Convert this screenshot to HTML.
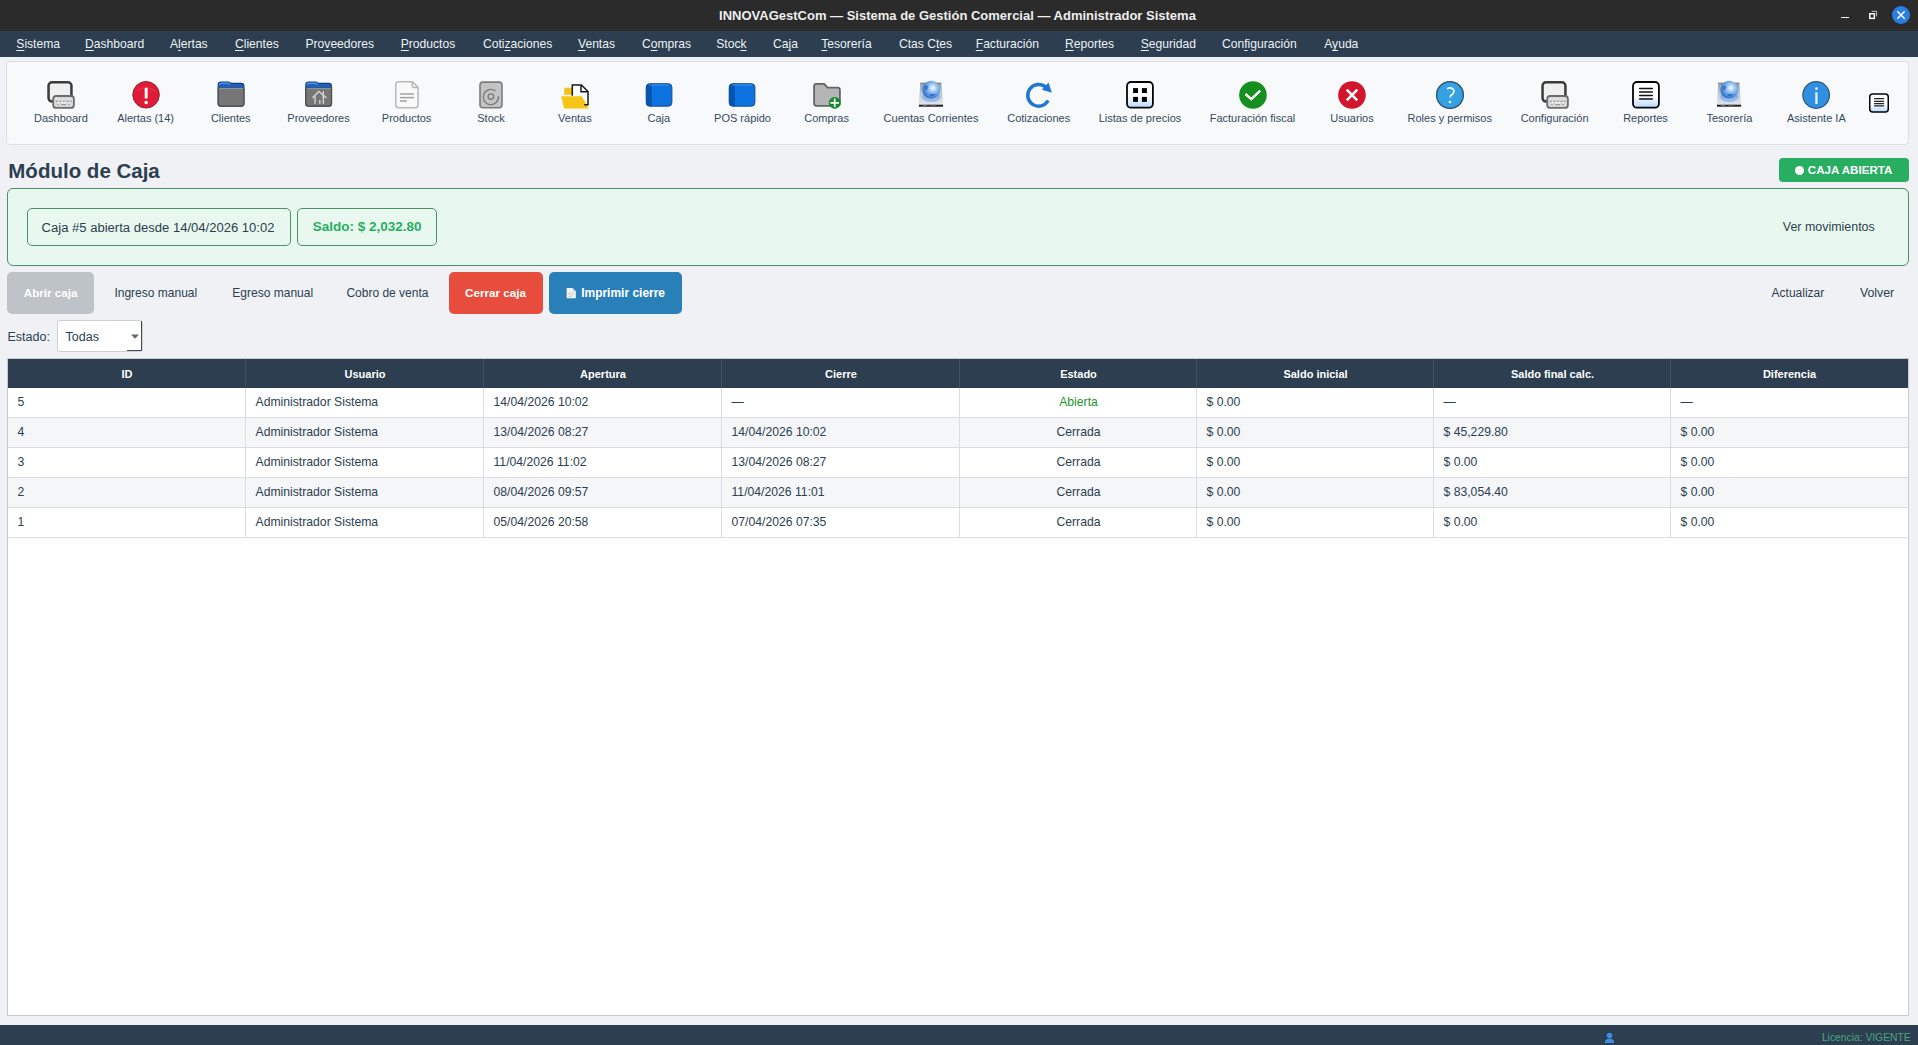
<!DOCTYPE html>
<html><head><meta charset="utf-8"><title>INNOVAGestCom</title>
<style>
html,body{margin:0;padding:0;width:1918px;height:1045px;overflow:hidden;background:#eff1f5;}
body{position:relative;font-family:"Liberation Sans",sans-serif;}
.b{position:absolute;}
.t{position:absolute;white-space:nowrap;}
u{text-decoration:underline;text-decoration-thickness:1px;text-underline-offset:2px;}
</style></head><body>
<div class="b" style="left:0px;top:0px;width:1918px;height:31px;background:#2b2b2b"></div>
<div class="t" style="left:607.50px;width:700px;text-align:center;top:9.00px;font-size:13px;line-height:13px;color:#eeeeee;font-weight:700;">INNOVAGestCom — Sistema de Gestión Comercial — Administrador Sistema</div>
<div class="b" style="left:1841px;top:16.6px;width:8px;height:1.5999999999999979px;background:#f2f2f2"></div>
<svg class="b" style="left:1866px;top:9px" width="14" height="14" viewBox="0 0 14 14"><rect x="3.75" y="4.75" width="4.6" height="4.6" fill="none" stroke="#f4f4f4" stroke-width="1.5"/><path d="M5.6 2.3 H10.6 V7.4" fill="none" stroke="#c8c8c8" stroke-width="1"/></svg>
<svg class="b" style="left:1891px;top:5px" width="20" height="20" viewBox="0 0 20 20"><circle cx="10" cy="10" r="9" fill="#2a7ee0"/><path d="M6.3 6.3 L13.7 13.7 M13.7 6.3 L6.3 13.7" stroke="#fff" stroke-width="1.5"/></svg>
<div class="b" style="left:0px;top:31px;width:1918px;height:26px;background:#2c3e50"></div>
<div class="t" style="left:16.30px;top:38.46px;font-size:12.1px;line-height:12.1px;color:#eef2f5;"><u>S</u>istema</div>
<div class="t" style="left:85.00px;top:38.46px;font-size:12.1px;line-height:12.1px;color:#eef2f5;"><u>D</u>ashboard</div>
<div class="t" style="left:170.00px;top:38.46px;font-size:12.1px;line-height:12.1px;color:#eef2f5;">A<u>l</u>ertas</div>
<div class="t" style="left:235.00px;top:38.46px;font-size:12.1px;line-height:12.1px;color:#eef2f5;"><u>C</u>lientes</div>
<div class="t" style="left:305.50px;top:38.46px;font-size:12.1px;line-height:12.1px;color:#eef2f5;">Pro<u>v</u>eedores</div>
<div class="t" style="left:400.75px;top:38.46px;font-size:12.1px;line-height:12.1px;color:#eef2f5;"><u>P</u>roductos</div>
<div class="t" style="left:483.00px;top:38.46px;font-size:12.1px;line-height:12.1px;color:#eef2f5;">Coti<u>z</u>aciones</div>
<div class="t" style="left:578.00px;top:38.46px;font-size:12.1px;line-height:12.1px;color:#eef2f5;"><u>V</u>entas</div>
<div class="t" style="left:642.00px;top:38.46px;font-size:12.1px;line-height:12.1px;color:#eef2f5;">C<u>o</u>mpras</div>
<div class="t" style="left:716.25px;top:38.46px;font-size:12.1px;line-height:12.1px;color:#eef2f5;">Stoc<u>k</u></div>
<div class="t" style="left:773.00px;top:38.46px;font-size:12.1px;line-height:12.1px;color:#eef2f5;">Ca<u>j</u>a</div>
<div class="t" style="left:821.25px;top:38.46px;font-size:12.1px;line-height:12.1px;color:#eef2f5;"><u>T</u>esorería</div>
<div class="t" style="left:899.00px;top:38.46px;font-size:12.1px;line-height:12.1px;color:#eef2f5;">Ctas C<u>t</u>es</div>
<div class="t" style="left:975.75px;top:38.46px;font-size:12.1px;line-height:12.1px;color:#eef2f5;"><u>F</u>acturación</div>
<div class="t" style="left:1065.00px;top:38.46px;font-size:12.1px;line-height:12.1px;color:#eef2f5;"><u>R</u>eportes</div>
<div class="t" style="left:1140.75px;top:38.46px;font-size:12.1px;line-height:12.1px;color:#eef2f5;"><u>S</u>eguridad</div>
<div class="t" style="left:1222.00px;top:38.46px;font-size:12.1px;line-height:12.1px;color:#eef2f5;">Con<u>f</u>iguración</div>
<div class="t" style="left:1324.25px;top:38.46px;font-size:12.1px;line-height:12.1px;color:#eef2f5;">A<u>y</u>uda</div>
<div class="b" style="left:0px;top:57px;width:1918px;height:968px;background:#eff1f5"></div>
<div class="b" style="left:6px;top:61px;width:1903px;height:84px;background:#f8f9fb;border:1px solid #dcdfe3;border-radius:4px;box-sizing:border-box"></div>
<svg class="b" style="left:44px;top:78px" width="36" height="34" viewBox="0 0 36 34"><rect x="4.55" y="4.35" width="22.9" height="19.2" rx="3.5" fill="#efefef" stroke="#3b3b3b" stroke-width="2.5"/><rect x="9.2" y="18" width="20.7" height="11.9" rx="3" fill="#d9d9d9" stroke="#6b6b6b" stroke-width="1.8"/><g fill="#8a8a8a"><rect x="12" y="22.6" width="1.6" height="1.2"/><rect x="15.6" y="22.6" width="1.6" height="1.2"/><rect x="19.1" y="22.6" width="1.6" height="1.2"/><rect x="22.7" y="22.6" width="1.6" height="1.2"/><rect x="26.2" y="22.6" width="1.4" height="1.2"/><rect x="13.3" y="26.2" width="1.4" height="1"/><rect x="17.2" y="26.2" width="4.9" height="1"/><rect x="24" y="26.2" width="1.6" height="1"/></g><g fill="#fafafa"><rect x="12.2" y="20.6" width="1.2" height="1"/><rect x="15.8" y="20.6" width="1.2" height="1"/><rect x="19.3" y="20.6" width="1.2" height="1"/><rect x="22.9" y="20.6" width="1.2" height="1"/><rect x="26.4" y="20.6" width="1" height="1"/><rect x="13.8" y="24.4" width="1.2" height="1"/><rect x="17.2" y="24.4" width="4.9" height="1"/><rect x="24.4" y="24.4" width="1.2" height="1"/></g></svg>
<svg class="b" style="left:130px;top:78px" width="36" height="34" viewBox="0 0 36 34"><circle cx="16.05" cy="16.75" r="13.3" fill="#e01b38" stroke="#8c1d2c" stroke-width="0.9"/><path d="M7,13 Q16,6 25,13" fill="none" stroke="#f05a6e" stroke-width="0.8" opacity="0.6"/><rect x="14.7" y="9.8" width="2.9" height="11" rx="1" fill="#fff"/><circle cx="16.15" cy="24.4" r="1.75" fill="#fff"/></svg>
<svg class="b" style="left:214px;top:78px" width="36" height="34" viewBox="0 0 36 34"><g transform="translate(-0.2,0)"><path d="M4.4,7 Q4.4,4.1 7.3,4.1 H14.6 Q16,4.1 16.8,5.4 H27.4 Q30.1,5.4 30.1,8.2 V25.6 Q30.1,28.2 27.4,28.2 H7.1 Q4.4,28.2 4.4,25.6 Z" fill="#1f5fbf" stroke="#153d78" stroke-width="1.1"/><path d="M5.8,7 Q5.8,5.3 7.5,5.3 H14.5 Q15.5,5.3 16,7" fill="none" stroke="#4a90ee" stroke-width="1.4"/><path d="M4.4,10.2 H30.1 V25.6 Q30.1,28.2 27.4,28.2 H7.1 Q4.4,28.2 4.4,25.6 Z" fill="#767676" stroke="#4f4f4f" stroke-width="1.3"/><path d="M5.2,10.6 H29.3" stroke="#9aa3ad" stroke-width="0.9"/></g></svg>
<svg class="b" style="left:301px;top:78px" width="36" height="34" viewBox="0 0 36 34"><g transform="translate(0.4,0)"><path d="M4.4,7 Q4.4,4.1 7.3,4.1 H14.6 Q16,4.1 16.8,5.4 H27.4 Q30.1,5.4 30.1,8.2 V25.6 Q30.1,28.2 27.4,28.2 H7.1 Q4.4,28.2 4.4,25.6 Z" fill="#1f5fbf" stroke="#153d78" stroke-width="1.1"/><path d="M5.8,7 Q5.8,5.3 7.5,5.3 H14.5 Q15.5,5.3 16,7" fill="none" stroke="#4a90ee" stroke-width="1.4"/><path d="M4.4,10.2 H30.1 V25.6 Q30.1,28.2 27.4,28.2 H7.1 Q4.4,28.2 4.4,25.6 Z" fill="#767676" stroke="#4f4f4f" stroke-width="1.3"/><path d="M5.2,10.6 H29.3" stroke="#9aa3ad" stroke-width="0.9"/><g fill="none" stroke="#d4d4d4" stroke-width="1.4" stroke-linecap="round"><path d="M11.4,19.6 L17.5,13.4 L24.6,19.6"/><path d="M13.6,17.6 V25.2 M21.9,13.6 V25.2 M18.4,22.4 V25.2"/></g></g></svg>
<svg class="b" style="left:388px;top:78px" width="36" height="34" viewBox="0 0 36 34"><path d="M10.5,3.85 H24.5 L30.05,9.4 V27.1 Q30.05,29.85 27.3,29.85 H10.5 Q7.75,29.85 7.75,27.1 V6.6 Q7.75,3.85 10.5,3.85 Z" fill="#f9f9f9" stroke="#b9b9b9" stroke-width="1.5"/><path d="M24.2,3.85 V7.5 Q24.2,9.6 26.3,9.6 H30.05" fill="none" stroke="#b9b9b9" stroke-width="1.5"/><g fill="#9c9c9c"><rect x="12" y="15.3" width="13.9" height="1.4"/><rect x="12" y="18.9" width="13.9" height="1.4"/><rect x="12" y="22.3" width="6.9" height="1.4"/></g></svg>
<svg class="b" style="left:473px;top:78px" width="36" height="34" viewBox="0 0 36 34"><rect x="7" y="4.1" width="22" height="25.6" rx="3" fill="#c4c4c4" stroke="#7b7b7b" stroke-width="1.6"/><path d="M22.5,13 A7.6,7.6 0 1 0 25.4,18.2" fill="none" stroke="#7a7a7a" stroke-width="1.3"/><circle cx="17.9" cy="18.6" r="2.8" fill="none" stroke="#7a7a7a" stroke-width="1.3"/></svg>
<svg class="b" style="left:557px;top:78px" width="36" height="34" viewBox="0 0 36 34"><rect x="7.2" y="9.8" width="7.8" height="7" fill="#f0c419"/><path d="M15.3,17.8 V6.9 H24.4 L31,13.5 V26.7 H27 L24.5,18.2 H15.3 Z" fill="#ffffff"/><path d="M4.2,18.2 H24.8 L31.8,30.6 H7.2 Z" fill="#f6c515"/><path d="M15.3,17.8 V6.9 H24.4 L31,13.5 V26.7 H27.2" fill="none" stroke="#181818" stroke-width="1.5"/><path d="M24,7 V13.7 H31" fill="none" stroke="#181818" stroke-width="1.5"/></svg>
<svg class="b" style="left:641px;top:78px" width="36" height="34" viewBox="0 0 36 34"><rect x="5.2" y="5.7" width="25.7" height="22.5" rx="3.5" fill="#0b72e0" stroke="#1a4d8f" stroke-width="1"/><path d="M8.7,5.7 H10.8 V28.2 H8.7 Q5.2,28.2 5.2,24.7 V9.2 Q5.2,5.7 8.7,5.7 Z" fill="#0754ad"/><path d="M8,7 H28" stroke="#4a9af0" stroke-width="0.9"/></svg>
<svg class="b" style="left:724px;top:78px" width="36" height="34" viewBox="0 0 36 34"><rect x="5.2" y="5.7" width="25.7" height="22.5" rx="3.5" fill="#0b72e0" stroke="#1a4d8f" stroke-width="1"/><path d="M8.7,5.7 H10.8 V28.2 H8.7 Q5.2,28.2 5.2,24.7 V9.2 Q5.2,5.7 8.7,5.7 Z" fill="#0754ad"/><path d="M8,7 H28" stroke="#4a9af0" stroke-width="0.9"/></svg>
<svg class="b" style="left:809px;top:78px" width="36" height="34" viewBox="0 0 36 34"><path d="M5.1,8 Q5.1,5.8 7.3,5.8 H15.2 L18.5,9.7 H28.6 Q30.9,9.7 30.9,12 V25.6 Q30.9,27.8 28.7,27.8 H7.3 Q5.1,27.8 5.1,25.6 Z" fill="#b5b5b5" stroke="#646464" stroke-width="1.8"/><circle cx="25.7" cy="24.8" r="5.9" fill="#12892a"/><path d="M21.4,24.8 H30 M25.7,20.5 V29.1" stroke="#fff" stroke-width="1.7"/></svg>
<svg class="b" style="left:913px;top:76px" width="36" height="34" viewBox="0 0 36 34"><defs><linearGradient id="drv" x1="0" y1="0" x2="0" y2="1"><stop offset="0" stop-color="#8f9aa8"/><stop offset="0.45" stop-color="#b9c6d6"/><stop offset="1" stop-color="#e2e6ec"/></linearGradient><radialGradient id="glb" cx="0.6" cy="0.4" r="0.65"><stop offset="0" stop-color="#ffffff"/><stop offset="0.3" stop-color="#a9cdf5"/><stop offset="0.75" stop-color="#4f8fdc"/><stop offset="1" stop-color="#2a63b8"/></radialGradient></defs><path d="M7.3,6.9 H28.3 L30.1,28.7 H5.9 Z" fill="url(#drv)"/><path d="M7.3,7.1 H28.3" stroke="#6b6f75" stroke-width="0.8"/><rect x="5.9" y="28.7" width="24.2" height="2" fill="#202020"/><rect x="10" y="28.9" width="4" height="1.2" fill="#777"/><rect x="17" y="28.9" width="6" height="1.2" fill="#555"/><ellipse cx="18.2" cy="20.5" rx="9.2" ry="5.2" fill="#79a8e6" opacity="0.75"/><ellipse cx="18.2" cy="23.5" rx="7.5" ry="2.4" fill="#9bbce8" opacity="0.7"/><circle cx="18.2" cy="13.7" r="8.9" fill="url(#glb)"/><path d="M11,10.5 Q13.5,8.5 15.5,10.5 Q15,14 12.5,15" fill="#1f5fb8" opacity="0.65"/><path d="M16.5,18.3 Q20,17 23,18.6 Q20,20.6 17,20" fill="#1f5fb8" opacity="0.7"/></svg>
<svg class="b" style="left:1021px;top:78px" width="36" height="34" viewBox="0 0 36 34"><path d="M27.13,22.5 A10.85,10.85 0 1 1 24.86,9.24" fill="none" stroke="#1e76d2" stroke-width="3.4"/><path d="M27.5,4.6 L30.9,14.7 L20.8,11.7 Z" fill="#1e76d2"/></svg>
<svg class="b" style="left:1122px;top:78px" width="36" height="34" viewBox="0 0 36 34"><defs><linearGradient id="frma" x1="0" y1="0" x2="0" y2="1"><stop offset="0.55" stop-color="#ffffff"/><stop offset="1" stop-color="#b6d8ff"/></linearGradient></defs><rect x="5" y="4" width="25.9" height="25.7" rx="4" fill="url(#frma)" stroke="#050505" stroke-width="1.8"/><g fill="#000"><rect x="11.1" y="10.1" width="4.9" height="4.9"/><rect x="19.9" y="10.1" width="5" height="4.9"/><rect x="11.1" y="18.9" width="4.9" height="5"/><rect x="19.9" y="18.9" width="5" height="5"/></g></svg>
<svg class="b" style="left:1235px;top:78px" width="36" height="34" viewBox="0 0 36 34"><circle cx="17.95" cy="17" r="13.8" fill="#178f20"/><path d="M10.4,16 L16.3,21.2 L25.2,12.7" fill="none" stroke="#fff" stroke-width="2.4"/></svg>
<svg class="b" style="left:1334px;top:78px" width="36" height="34" viewBox="0 0 36 34"><circle cx="17.95" cy="17" r="13.8" fill="#d2142c"/><path d="M12.7,11.7 L23.3,22.4 M23.3,11.7 L12.7,22.4" stroke="#fff" stroke-width="2.6"/></svg>
<svg class="b" style="left:1432px;top:78px" width="36" height="34" viewBox="0 0 36 34"><circle cx="18" cy="17" r="13.4" fill="#35a1e3" stroke="#2b4e6a" stroke-width="1.3"/><path d="M15,10.9 Q17.5,9.3 20.2,10.4 Q22.6,11.8 21.6,14.6 Q20.8,16.4 18.5,17.8 V19.6" fill="none" stroke="#eaffff" stroke-width="1.7"/><circle cx="18" cy="24" r="1.35" fill="#eaffff"/></svg>
<svg class="b" style="left:1537.75px;top:78px" width="36" height="34" viewBox="0 0 36 34"><rect x="4.55" y="4.35" width="22.9" height="19.2" rx="3.5" fill="#efefef" stroke="#3b3b3b" stroke-width="2.5"/><rect x="9.2" y="18" width="20.7" height="11.9" rx="3" fill="#d9d9d9" stroke="#6b6b6b" stroke-width="1.8"/><g fill="#8a8a8a"><rect x="12" y="22.6" width="1.6" height="1.2"/><rect x="15.6" y="22.6" width="1.6" height="1.2"/><rect x="19.1" y="22.6" width="1.6" height="1.2"/><rect x="22.7" y="22.6" width="1.6" height="1.2"/><rect x="26.2" y="22.6" width="1.4" height="1.2"/><rect x="13.3" y="26.2" width="1.4" height="1"/><rect x="17.2" y="26.2" width="4.9" height="1"/><rect x="24" y="26.2" width="1.6" height="1"/></g><g fill="#fafafa"><rect x="12.2" y="20.6" width="1.2" height="1"/><rect x="15.8" y="20.6" width="1.2" height="1"/><rect x="19.3" y="20.6" width="1.2" height="1"/><rect x="22.9" y="20.6" width="1.2" height="1"/><rect x="26.4" y="20.6" width="1" height="1"/><rect x="13.8" y="24.4" width="1.2" height="1"/><rect x="17.2" y="24.4" width="4.9" height="1"/><rect x="24.4" y="24.4" width="1.2" height="1"/></g></svg>
<svg class="b" style="left:1628px;top:78px" width="36" height="34" viewBox="0 0 36 34"><defs><linearGradient id="frmb" x1="0" y1="0" x2="0" y2="1"><stop offset="0.55" stop-color="#ffffff"/><stop offset="1" stop-color="#b6d8ff"/></linearGradient></defs><rect x="5" y="4" width="25.9" height="25.7" rx="4" fill="url(#frmb)" stroke="#050505" stroke-width="1.8"/><g stroke="#111" stroke-width="1.5" stroke-linecap="round"><path d="M11.6,10.6 H24.4 M11.6,14 H24.4 M11.6,17.6 H24.4 M11.6,21 H24.4"/></g></svg>
<svg class="b" style="left:1711.25px;top:76px" width="36" height="34" viewBox="0 0 36 34"><defs><linearGradient id="drv2" x1="0" y1="0" x2="0" y2="1"><stop offset="0" stop-color="#8f9aa8"/><stop offset="0.45" stop-color="#b9c6d6"/><stop offset="1" stop-color="#e2e6ec"/></linearGradient><radialGradient id="glb2" cx="0.6" cy="0.4" r="0.65"><stop offset="0" stop-color="#ffffff"/><stop offset="0.3" stop-color="#a9cdf5"/><stop offset="0.75" stop-color="#4f8fdc"/><stop offset="1" stop-color="#2a63b8"/></radialGradient></defs><path d="M7.3,6.9 H28.3 L30.1,28.7 H5.9 Z" fill="url(#drv2)"/><path d="M7.3,7.1 H28.3" stroke="#6b6f75" stroke-width="0.8"/><rect x="5.9" y="28.7" width="24.2" height="2" fill="#202020"/><rect x="10" y="28.9" width="4" height="1.2" fill="#777"/><rect x="17" y="28.9" width="6" height="1.2" fill="#555"/><ellipse cx="18.2" cy="20.5" rx="9.2" ry="5.2" fill="#79a8e6" opacity="0.75"/><ellipse cx="18.2" cy="23.5" rx="7.5" ry="2.4" fill="#9bbce8" opacity="0.7"/><circle cx="18.2" cy="13.7" r="8.9" fill="url(#glb2)"/><path d="M11,10.5 Q13.5,8.5 15.5,10.5 Q15,14 12.5,15" fill="#1f5fb8" opacity="0.65"/><path d="M16.5,18.3 Q20,17 23,18.6 Q20,20.6 17,20" fill="#1f5fb8" opacity="0.7"/></svg>
<svg class="b" style="left:1800px;top:78px" width="36" height="34" viewBox="0 0 36 34"><circle cx="16.15" cy="17" r="13.3" fill="#2f8fe0" stroke="#2b5577" stroke-width="1.2"/><circle cx="16.4" cy="10.6" r="1.3" fill="#e8f8ff"/><rect x="15.3" y="14.2" width="2.2" height="11.8" fill="#e8f8ff"/></svg>
<svg class="b" style="left:1866px;top:90px" width="26" height="26" viewBox="0 0 26 26"><defs><linearGradient id="frmc" x1="0" y1="0" x2="0" y2="1"><stop offset="0.55" stop-color="#ffffff"/><stop offset="1" stop-color="#b6d8ff"/></linearGradient></defs><rect x="3.75" y="3.95" width="18.5" height="18" rx="3" fill="url(#frmc)" stroke="#050505" stroke-width="1.5"/><g stroke="#222" stroke-width="1.2"><path d="M8.1,8.6 H18.1 M8.1,11.4 H18.1 M8.1,13.6 H18.1 M8.1,15.9 H18.1"/></g></svg>
<div class="t" style="left:-19.10px;width:160px;text-align:center;top:112.89px;font-size:11px;line-height:11px;color:#34495e;">Dashboard</div>
<div class="t" style="left:65.60px;width:160px;text-align:center;top:112.89px;font-size:11px;line-height:11px;color:#34495e;">Alertas (14)</div>
<div class="t" style="left:150.75px;width:160px;text-align:center;top:112.89px;font-size:11px;line-height:11px;color:#34495e;">Clientes</div>
<div class="t" style="left:238.50px;width:160px;text-align:center;top:112.89px;font-size:11px;line-height:11px;color:#34495e;">Proveedores</div>
<div class="t" style="left:326.60px;width:160px;text-align:center;top:112.89px;font-size:11px;line-height:11px;color:#34495e;">Productos</div>
<div class="t" style="left:411.00px;width:160px;text-align:center;top:112.89px;font-size:11px;line-height:11px;color:#34495e;">Stock</div>
<div class="t" style="left:494.90px;width:160px;text-align:center;top:112.89px;font-size:11px;line-height:11px;color:#34495e;">Ventas</div>
<div class="t" style="left:578.75px;width:160px;text-align:center;top:112.89px;font-size:11px;line-height:11px;color:#34495e;">Caja</div>
<div class="t" style="left:662.50px;width:160px;text-align:center;top:112.89px;font-size:11px;line-height:11px;color:#34495e;">POS rápido</div>
<div class="t" style="left:746.60px;width:160px;text-align:center;top:112.89px;font-size:11px;line-height:11px;color:#34495e;">Compras</div>
<div class="t" style="left:851.00px;width:160px;text-align:center;top:112.89px;font-size:11px;line-height:11px;color:#34495e;">Cuentas Corrientes</div>
<div class="t" style="left:958.75px;width:160px;text-align:center;top:112.89px;font-size:11px;line-height:11px;color:#34495e;">Cotizaciones</div>
<div class="t" style="left:1060.00px;width:160px;text-align:center;top:112.89px;font-size:11px;line-height:11px;color:#34495e;">Listas de precios</div>
<div class="t" style="left:1172.50px;width:160px;text-align:center;top:112.89px;font-size:11px;line-height:11px;color:#34495e;">Facturación fiscal</div>
<div class="t" style="left:1272.00px;width:160px;text-align:center;top:112.89px;font-size:11px;line-height:11px;color:#34495e;">Usuarios</div>
<div class="t" style="left:1369.75px;width:160px;text-align:center;top:112.89px;font-size:11px;line-height:11px;color:#34495e;">Roles y permisos</div>
<div class="t" style="left:1474.60px;width:160px;text-align:center;top:112.89px;font-size:11px;line-height:11px;color:#34495e;">Configuración</div>
<div class="t" style="left:1565.50px;width:160px;text-align:center;top:112.89px;font-size:11px;line-height:11px;color:#34495e;">Reportes</div>
<div class="t" style="left:1649.40px;width:160px;text-align:center;top:112.89px;font-size:11px;line-height:11px;color:#34495e;">Tesorería</div>
<div class="t" style="left:1736.40px;width:160px;text-align:center;top:112.89px;font-size:11px;line-height:11px;color:#34495e;">Asistente IA</div>
<div class="t" style="left:8.30px;top:161.15px;font-size:20.5px;line-height:20.5px;color:#2c3e50;font-weight:700;">Módulo de Caja</div>
<div class="b" style="left:1779px;top:158px;width:130px;height:24px;background:#27ae60;border-radius:4px"></div>
<div class="b" style="left:1794.6px;top:166px;width:9.4px;height:9.4px;border-radius:50%;background:#ffffff"></div>
<div class="t" style="left:1807.80px;top:164.08px;font-size:11.6px;line-height:11.6px;color:#ffffff;font-weight:700;">CAJA ABIERTA</div>
<div class="b" style="left:7px;top:188px;width:1902px;height:78px;background:#e9f8ee;border:1px solid #4a9068;border-radius:6px;box-sizing:border-box"></div>
<div class="b" style="left:27px;top:208px;width:264px;height:38px;border:1px solid #4a9068;border-radius:5px;box-sizing:border-box"></div>
<div class="t" style="left:41.60px;top:220.55px;font-size:13.05px;line-height:13.05px;color:#2c3e50;">Caja #5 abierta desde 14/04/2026 10:02</div>
<div class="b" style="left:297px;top:208px;width:140px;height:38px;border:1px solid #4a9068;border-radius:5px;box-sizing:border-box"></div>
<div class="t" style="left:312.70px;top:220.07px;font-size:13.5px;line-height:13.5px;color:#27ae60;font-weight:700;">Saldo: $ 2,032.80</div>
<div class="t" style="left:1782.80px;top:221.46px;font-size:12.45px;line-height:12.45px;color:#2c3e50;">Ver movimientos</div>
<div class="b" style="left:7px;top:272px;width:87px;height:42px;background:#bdc3c7;border-radius:5px"></div>
<div class="t" style="left:23.75px;top:287.14px;font-size:11.65px;line-height:11.65px;color:#ffffff;font-weight:700;">Abrir caja</div>
<div class="t" style="left:114.40px;top:286.63px;font-size:12.02px;line-height:12.02px;color:#2c3e50;">Ingreso manual</div>
<div class="t" style="left:232.30px;top:286.63px;font-size:12.02px;line-height:12.02px;color:#2c3e50;">Egreso manual</div>
<div class="t" style="left:346.40px;top:286.64px;font-size:12.0px;line-height:12.0px;color:#2c3e50;">Cobro de venta</div>
<div class="b" style="left:449px;top:272px;width:94px;height:42px;background:#e74c3c;border-radius:5px"></div>
<div class="t" style="left:465.00px;top:287.10px;font-size:11.7px;line-height:11.7px;color:#ffffff;font-weight:700;">Cerrar caja</div>
<div class="b" style="left:549px;top:272px;width:133px;height:42px;background:#2980b9;border-radius:5px"></div>
<svg class="b" style="left:566px;top:287px" width="11" height="12" viewBox="0 0 11 12"><path d="M0.7,1 H6.5 L9.8,4.3 V11.3 H0.7 Z" fill="#f4f4f4"/><path d="M6.5,1 V4.3 H9.8" fill="#cfcfcf"/><path d="M2.2,6 H8 M2.2,7.8 H8 M2.2,9.6 H6" stroke="#c9c9c9" stroke-width="0.8"/></svg>
<div class="t" style="left:581.20px;top:287.87px;font-size:11.97px;line-height:11.97px;color:#ffffff;font-weight:700;">Imprimir cierre</div>
<div class="t" style="left:1771.60px;top:286.74px;font-size:12.0px;line-height:12.0px;color:#2c3e50;">Actualizar</div>
<div class="t" style="left:1860.00px;top:287.49px;font-size:12.3px;line-height:12.3px;color:#2c3e50;">Volver</div>
<div class="t" style="left:7.50px;top:331.02px;font-size:12.5px;line-height:12.5px;color:#2c3e50;">Estado:</div>
<div class="b" style="left:57px;top:320px;width:86px;height:32px;background:#ffffff;border:1px solid #cdd1d6;border-radius:3px;box-sizing:border-box"></div>
<div class="b" style="left:141px;top:321px;width:1.4000000000000057px;height:30px;background:#454b52"></div>
<div class="b" style="left:127px;top:349.6px;width:15.400000000000006px;height:1.3999999999999773px;background:#454b52"></div>
<svg class="b" style="left:130px;top:333.6px" width="10" height="6" viewBox="0 0 10 6"><path d="M1,0.5 H9 L5,4.8 Z" fill="#666"/></svg>
<div class="t" style="left:65.60px;top:331.02px;font-size:12.5px;line-height:12.5px;color:#2c3e50;">Todas</div>
<div class="b" style="left:7px;top:358px;width:1902px;height:658px;background:#ffffff;border:1px solid #c6c9ce;box-sizing:border-box"></div>
<div class="b" style="left:8px;top:359px;width:1900px;height:29px;background:#2c3e50"></div>
<div class="t" style="left:27.00px;width:200px;text-align:center;top:368.69px;font-size:11px;line-height:11px;color:#ffffff;font-weight:700;">ID</div>
<div class="t" style="left:265.00px;width:200px;text-align:center;top:368.69px;font-size:11px;line-height:11px;color:#ffffff;font-weight:700;">Usuario</div>
<div class="t" style="left:503.00px;width:200px;text-align:center;top:368.69px;font-size:11px;line-height:11px;color:#ffffff;font-weight:700;">Apertura</div>
<div class="t" style="left:741.00px;width:200px;text-align:center;top:368.69px;font-size:11px;line-height:11px;color:#ffffff;font-weight:700;">Cierre</div>
<div class="t" style="left:978.50px;width:200px;text-align:center;top:368.69px;font-size:11px;line-height:11px;color:#ffffff;font-weight:700;">Estado</div>
<div class="t" style="left:1215.50px;width:200px;text-align:center;top:368.69px;font-size:11px;line-height:11px;color:#ffffff;font-weight:700;">Saldo inicial</div>
<div class="t" style="left:1452.50px;width:200px;text-align:center;top:368.69px;font-size:11px;line-height:11px;color:#ffffff;font-weight:700;">Saldo final calc.</div>
<div class="t" style="left:1689.50px;width:200px;text-align:center;top:368.69px;font-size:11px;line-height:11px;color:#ffffff;font-weight:700;">Diferencia</div>
<div class="b" style="left:245px;top:359px;width:1px;height:29px;background:#3e5064"></div>
<div class="b" style="left:483px;top:359px;width:1px;height:29px;background:#3e5064"></div>
<div class="b" style="left:721px;top:359px;width:1px;height:29px;background:#3e5064"></div>
<div class="b" style="left:959px;top:359px;width:1px;height:29px;background:#3e5064"></div>
<div class="b" style="left:1196px;top:359px;width:1px;height:29px;background:#3e5064"></div>
<div class="b" style="left:1433px;top:359px;width:1px;height:29px;background:#3e5064"></div>
<div class="b" style="left:1670px;top:359px;width:1px;height:29px;background:#3e5064"></div>
<div class="b" style="left:8px;top:388px;width:1900px;height:29px;background:#ffffff"></div>
<div class="b" style="left:8px;top:417px;width:1900px;height:1px;background:#d9dce0"></div>
<div class="b" style="left:245px;top:388px;width:1px;height:30px;background:#d9dce0"></div>
<div class="b" style="left:483px;top:388px;width:1px;height:30px;background:#d9dce0"></div>
<div class="b" style="left:721px;top:388px;width:1px;height:30px;background:#d9dce0"></div>
<div class="b" style="left:959px;top:388px;width:1px;height:30px;background:#d9dce0"></div>
<div class="b" style="left:1196px;top:388px;width:1px;height:30px;background:#d9dce0"></div>
<div class="b" style="left:1433px;top:388px;width:1px;height:30px;background:#d9dce0"></div>
<div class="b" style="left:1670px;top:388px;width:1px;height:30px;background:#d9dce0"></div>
<div class="t" style="left:17.50px;top:395.57px;font-size:12.2px;line-height:12.2px;color:#2c3e50;">5</div>
<div class="t" style="left:255.50px;top:395.57px;font-size:12.2px;line-height:12.2px;color:#2c3e50;">Administrador Sistema</div>
<div class="t" style="left:493.50px;top:395.57px;font-size:12.2px;line-height:12.2px;color:#2c3e50;">14/04/2026 10:02</div>
<div class="t" style="left:731.50px;top:395.57px;font-size:12.2px;line-height:12.2px;color:#2c3e50;">—</div>
<div class="t" style="left:978.50px;width:200px;text-align:center;top:395.57px;font-size:12.2px;line-height:12.2px;color:#24962e;">Abierta</div>
<div class="t" style="left:1206.50px;top:395.57px;font-size:12.2px;line-height:12.2px;color:#2c3e50;">$ 0.00</div>
<div class="t" style="left:1443.50px;top:395.57px;font-size:12.2px;line-height:12.2px;color:#2c3e50;">—</div>
<div class="t" style="left:1680.50px;top:395.57px;font-size:12.2px;line-height:12.2px;color:#2c3e50;">—</div>
<div class="b" style="left:8px;top:418px;width:1900px;height:29px;background:#f4f6f8"></div>
<div class="b" style="left:8px;top:447px;width:1900px;height:1px;background:#d9dce0"></div>
<div class="b" style="left:245px;top:418px;width:1px;height:30px;background:#d9dce0"></div>
<div class="b" style="left:483px;top:418px;width:1px;height:30px;background:#d9dce0"></div>
<div class="b" style="left:721px;top:418px;width:1px;height:30px;background:#d9dce0"></div>
<div class="b" style="left:959px;top:418px;width:1px;height:30px;background:#d9dce0"></div>
<div class="b" style="left:1196px;top:418px;width:1px;height:30px;background:#d9dce0"></div>
<div class="b" style="left:1433px;top:418px;width:1px;height:30px;background:#d9dce0"></div>
<div class="b" style="left:1670px;top:418px;width:1px;height:30px;background:#d9dce0"></div>
<div class="t" style="left:17.50px;top:425.57px;font-size:12.2px;line-height:12.2px;color:#2c3e50;">4</div>
<div class="t" style="left:255.50px;top:425.57px;font-size:12.2px;line-height:12.2px;color:#2c3e50;">Administrador Sistema</div>
<div class="t" style="left:493.50px;top:425.57px;font-size:12.2px;line-height:12.2px;color:#2c3e50;">13/04/2026 08:27</div>
<div class="t" style="left:731.50px;top:425.57px;font-size:12.2px;line-height:12.2px;color:#2c3e50;">14/04/2026 10:02</div>
<div class="t" style="left:978.50px;width:200px;text-align:center;top:425.57px;font-size:12.2px;line-height:12.2px;color:#2c3e50;">Cerrada</div>
<div class="t" style="left:1206.50px;top:425.57px;font-size:12.2px;line-height:12.2px;color:#2c3e50;">$ 0.00</div>
<div class="t" style="left:1443.50px;top:425.57px;font-size:12.2px;line-height:12.2px;color:#2c3e50;">$ 45,229.80</div>
<div class="t" style="left:1680.50px;top:425.57px;font-size:12.2px;line-height:12.2px;color:#2c3e50;">$ 0.00</div>
<div class="b" style="left:8px;top:448px;width:1900px;height:29px;background:#ffffff"></div>
<div class="b" style="left:8px;top:477px;width:1900px;height:1px;background:#d9dce0"></div>
<div class="b" style="left:245px;top:448px;width:1px;height:30px;background:#d9dce0"></div>
<div class="b" style="left:483px;top:448px;width:1px;height:30px;background:#d9dce0"></div>
<div class="b" style="left:721px;top:448px;width:1px;height:30px;background:#d9dce0"></div>
<div class="b" style="left:959px;top:448px;width:1px;height:30px;background:#d9dce0"></div>
<div class="b" style="left:1196px;top:448px;width:1px;height:30px;background:#d9dce0"></div>
<div class="b" style="left:1433px;top:448px;width:1px;height:30px;background:#d9dce0"></div>
<div class="b" style="left:1670px;top:448px;width:1px;height:30px;background:#d9dce0"></div>
<div class="t" style="left:17.50px;top:455.57px;font-size:12.2px;line-height:12.2px;color:#2c3e50;">3</div>
<div class="t" style="left:255.50px;top:455.57px;font-size:12.2px;line-height:12.2px;color:#2c3e50;">Administrador Sistema</div>
<div class="t" style="left:493.50px;top:455.57px;font-size:12.2px;line-height:12.2px;color:#2c3e50;">11/04/2026 11:02</div>
<div class="t" style="left:731.50px;top:455.57px;font-size:12.2px;line-height:12.2px;color:#2c3e50;">13/04/2026 08:27</div>
<div class="t" style="left:978.50px;width:200px;text-align:center;top:455.57px;font-size:12.2px;line-height:12.2px;color:#2c3e50;">Cerrada</div>
<div class="t" style="left:1206.50px;top:455.57px;font-size:12.2px;line-height:12.2px;color:#2c3e50;">$ 0.00</div>
<div class="t" style="left:1443.50px;top:455.57px;font-size:12.2px;line-height:12.2px;color:#2c3e50;">$ 0.00</div>
<div class="t" style="left:1680.50px;top:455.57px;font-size:12.2px;line-height:12.2px;color:#2c3e50;">$ 0.00</div>
<div class="b" style="left:8px;top:478px;width:1900px;height:29px;background:#f4f6f8"></div>
<div class="b" style="left:8px;top:507px;width:1900px;height:1px;background:#d9dce0"></div>
<div class="b" style="left:245px;top:478px;width:1px;height:30px;background:#d9dce0"></div>
<div class="b" style="left:483px;top:478px;width:1px;height:30px;background:#d9dce0"></div>
<div class="b" style="left:721px;top:478px;width:1px;height:30px;background:#d9dce0"></div>
<div class="b" style="left:959px;top:478px;width:1px;height:30px;background:#d9dce0"></div>
<div class="b" style="left:1196px;top:478px;width:1px;height:30px;background:#d9dce0"></div>
<div class="b" style="left:1433px;top:478px;width:1px;height:30px;background:#d9dce0"></div>
<div class="b" style="left:1670px;top:478px;width:1px;height:30px;background:#d9dce0"></div>
<div class="t" style="left:17.50px;top:485.57px;font-size:12.2px;line-height:12.2px;color:#2c3e50;">2</div>
<div class="t" style="left:255.50px;top:485.57px;font-size:12.2px;line-height:12.2px;color:#2c3e50;">Administrador Sistema</div>
<div class="t" style="left:493.50px;top:485.57px;font-size:12.2px;line-height:12.2px;color:#2c3e50;">08/04/2026 09:57</div>
<div class="t" style="left:731.50px;top:485.57px;font-size:12.2px;line-height:12.2px;color:#2c3e50;">11/04/2026 11:01</div>
<div class="t" style="left:978.50px;width:200px;text-align:center;top:485.57px;font-size:12.2px;line-height:12.2px;color:#2c3e50;">Cerrada</div>
<div class="t" style="left:1206.50px;top:485.57px;font-size:12.2px;line-height:12.2px;color:#2c3e50;">$ 0.00</div>
<div class="t" style="left:1443.50px;top:485.57px;font-size:12.2px;line-height:12.2px;color:#2c3e50;">$ 83,054.40</div>
<div class="t" style="left:1680.50px;top:485.57px;font-size:12.2px;line-height:12.2px;color:#2c3e50;">$ 0.00</div>
<div class="b" style="left:8px;top:508px;width:1900px;height:29px;background:#ffffff"></div>
<div class="b" style="left:8px;top:537px;width:1900px;height:1px;background:#d9dce0"></div>
<div class="b" style="left:245px;top:508px;width:1px;height:30px;background:#d9dce0"></div>
<div class="b" style="left:483px;top:508px;width:1px;height:30px;background:#d9dce0"></div>
<div class="b" style="left:721px;top:508px;width:1px;height:30px;background:#d9dce0"></div>
<div class="b" style="left:959px;top:508px;width:1px;height:30px;background:#d9dce0"></div>
<div class="b" style="left:1196px;top:508px;width:1px;height:30px;background:#d9dce0"></div>
<div class="b" style="left:1433px;top:508px;width:1px;height:30px;background:#d9dce0"></div>
<div class="b" style="left:1670px;top:508px;width:1px;height:30px;background:#d9dce0"></div>
<div class="t" style="left:17.50px;top:515.57px;font-size:12.2px;line-height:12.2px;color:#2c3e50;">1</div>
<div class="t" style="left:255.50px;top:515.57px;font-size:12.2px;line-height:12.2px;color:#2c3e50;">Administrador Sistema</div>
<div class="t" style="left:493.50px;top:515.57px;font-size:12.2px;line-height:12.2px;color:#2c3e50;">05/04/2026 20:58</div>
<div class="t" style="left:731.50px;top:515.57px;font-size:12.2px;line-height:12.2px;color:#2c3e50;">07/04/2026 07:35</div>
<div class="t" style="left:978.50px;width:200px;text-align:center;top:515.57px;font-size:12.2px;line-height:12.2px;color:#2c3e50;">Cerrada</div>
<div class="t" style="left:1206.50px;top:515.57px;font-size:12.2px;line-height:12.2px;color:#2c3e50;">$ 0.00</div>
<div class="t" style="left:1443.50px;top:515.57px;font-size:12.2px;line-height:12.2px;color:#2c3e50;">$ 0.00</div>
<div class="t" style="left:1680.50px;top:515.57px;font-size:12.2px;line-height:12.2px;color:#2c3e50;">$ 0.00</div>
<div class="b" style="left:0px;top:1025px;width:1918px;height:20px;background:#2c3e50"></div>
<div class="t" style="left:1710.60px;width:200px;text-align:right;top:1033.38px;font-size:10.3px;line-height:10.3px;color:#45a97c;">Licencia: VIGENTE</div>
<svg class="b" style="left:1604px;top:1032px" width="11" height="12" viewBox="0 0 11 12"><circle cx="5.5" cy="3.6" r="2.8" fill="#3a8ee6"/><path d="M0.8,11 Q0.8,6.8 5.5,6.8 Q10.2,6.8 10.2,11 Z" fill="#3a8ee6"/></svg>
</body></html>
